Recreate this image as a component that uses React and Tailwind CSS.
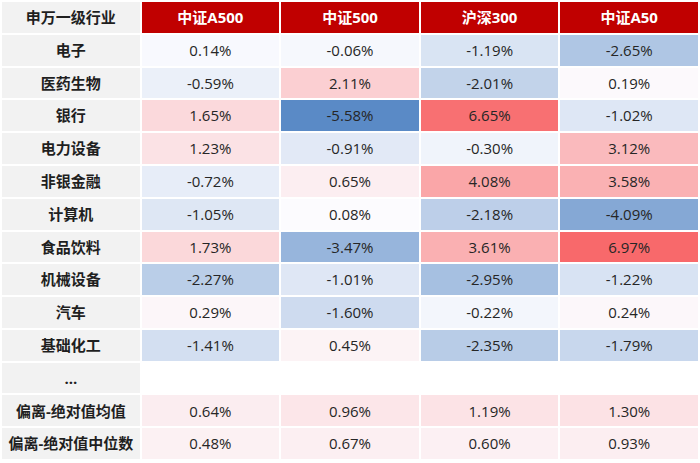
import React from "react";

const headers = ["中证A500", "中证500", "沪深300", "中证A50"];

// value + background for each cell (3-colour scale, blue = low, red = high)
const rows = [
  { name: "电子", cells: [["0.14%", "bg-[#F8F9FE]"], ["-0.06%", "bg-[#F6F8FD]"], ["-1.19%", "bg-[#D9E4F3]"], ["-2.65%", "bg-[#AFC6E4]"]] },
  { name: "医药生物", cells: [["-0.59%", "bg-[#EBF0F9]"], ["2.11%", "bg-[#FBCFD2]"], ["-2.01%", "bg-[#C2D3EA]"], ["0.19%", "bg-[#FCF9FC]"]] },
  { name: "银行", cells: [["1.65%", "bg-[#FBD9DC]"], ["-5.58%", "bg-[#5A8AC6]"], ["6.65%", "bg-[#F87072]"], ["-1.02%", "bg-[#DEE7F5]"]] },
  { name: "电力设备", cells: [["1.23%", "bg-[#FBE2E5]"], ["-0.91%", "bg-[#E2E9F6]"], ["-0.30%", "bg-[#F0F4FB]"], ["3.12%", "bg-[#FABABD]"]] },
  { name: "非银金融", cells: [["-0.72%", "bg-[#E7EDF8]"], ["0.65%", "bg-[#FCEEF1]"], ["4.08%", "bg-[#FAA6A8]"], ["3.58%", "bg-[#FAB1B3]"]] },
  { name: "计算机", cells: [["-1.05%", "bg-[#DEE7F4]"], ["0.08%", "bg-[#FCFBFE]"], ["-2.18%", "bg-[#BDCFE9]"], ["-4.09%", "bg-[#85A8D5]"]] },
  { name: "食品饮料", cells: [["1.73%", "bg-[#FBD8DA]"], ["-3.47%", "bg-[#97B5DC]"], ["3.61%", "bg-[#FAB0B2]"], ["6.97%", "bg-[#F8696B]"]] },
  { name: "机械设备", cells: [["-2.27%", "bg-[#BACEE8]"], ["-1.01%", "bg-[#DFE7F5]"], ["-2.95%", "bg-[#A6C0E1]"], ["-1.22%", "bg-[#D8E3F3]"]] },
  { name: "汽车", cells: [["0.29%", "bg-[#FCF6F9]"], ["-1.60%", "bg-[#CEDBEF]"], ["-0.22%", "bg-[#F3F6FC]"], ["0.24%", "bg-[#FCF7FA]"]] },
  { name: "基础化工", cells: [["-1.41%", "bg-[#D3DFF1]"], ["0.45%", "bg-[#FCF3F5]"], ["-2.35%", "bg-[#B8CCE7]"], ["-1.79%", "bg-[#C8D7ED]"]] },
  { name: "...", cells: [["", "bg-white"], ["", "bg-white"], ["", "bg-white"], ["", "bg-white"]] },
  { name: "偏离-绝对值均值", cells: [["0.64%", "bg-[#FBEDF0]"], ["0.96%", "bg-[#FCE6E9]"], ["1.19%", "bg-[#FCE3E6]"], ["1.30%", "bg-[#FCE2E5]"]] },
  { name: "偏离-绝对值中位数", cells: [["0.48%", "bg-[#FCF1F3]"], ["0.67%", "bg-[#FCEFF2]"], ["0.60%", "bg-[#FCF0F3]"], ["0.93%", "bg-[#FCEEF1]"]] },
];

export default function App() {
  return (
    <div className="w-[700px] h-[463px] bg-white pt-[2px] pb-[4px] px-[2px] font-['Open_Sans','Noto_Sans_CJK_SC',sans-serif]">
      <div className="grid h-full grid-cols-5 grid-rows-[repeat(14,minmax(0,1fr))] gap-[2px] text-[15px]">
        <div className="flex items-center justify-center bg-[#F2F2F2] font-bold text-[#1f1f1f]">申万一级行业</div>
        {headers.map((h) => (
          <div key={h} className="flex items-center justify-center bg-[#C00000] font-bold text-white">
            {h}
          </div>
        ))}
        {rows.map((row) => (
          <React.Fragment key={row.name}>
            <div className="flex items-center justify-center bg-[#F2F2F2] font-bold text-[#1f1f1f] whitespace-nowrap">
              {row.name}
            </div>
            {row.cells.map(([v, bg], i) => (
              <div key={i} className={`flex items-center justify-center text-[#262626] ${bg}`}>
                {v}
              </div>
            ))}
          </React.Fragment>
        ))}
      </div>
    </div>
  );
}
